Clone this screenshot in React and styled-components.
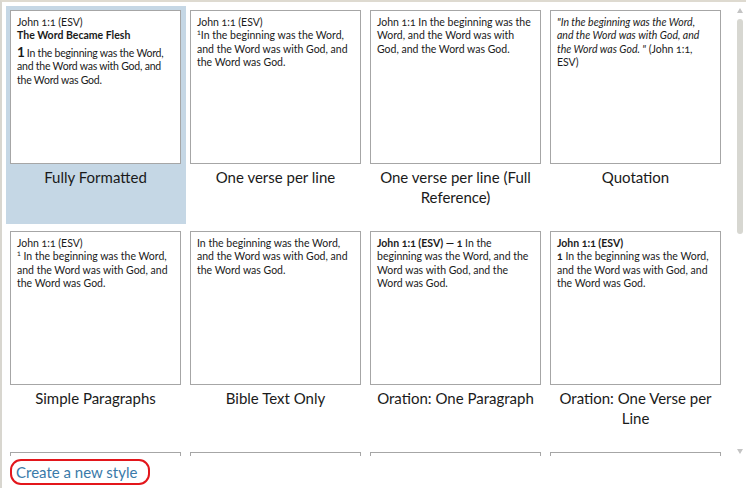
import React from "react";
import styled, { createGlobalStyle } from "styled-components";

const Global = createGlobalStyle`
  html, body { margin: 0; padding: 0; background: #fff; }
  body { font-family: Lato, "Noto Sans", sans-serif; color: #1e1e1e; }
`;

const Frame = styled.div`
  width: 746px;
  height: 488px;
  box-sizing: border-box;
  border-left: 2px solid #d8d6cf;
  border-top: 2px solid #dedad0;
  display: flex;
  flex-direction: column;
  overflow: hidden;
`;

const Body = styled.div`
  flex: 1;
  display: flex;
  min-height: 0;
`;

const Viewport = styled.div`
  flex: 1;
  overflow: hidden;
  padding: 4px 0 0 4px;
`;

const Grid = styled.div`
  display: grid;
  grid-template-columns: repeat(4, 180px);
  grid-auto-rows: 218px;
  row-gap: 3px;
`;

const Tile = styled.div`
  box-sizing: border-box;
  padding: 4px 5px 0 4px;
  background: ${(p) => (p.$selected ? "#c5d7e5" : "transparent")};
  display: flex;
  flex-direction: column;
`;

const Card = styled.div`
  box-sizing: border-box;
  height: 154px;
  border: 1px solid #a6a6a6;
  background: #fff;
  padding: 5px 9px 5px 6px;
  font-size: 10.5px;
  line-height: 13.4px;
  color: #1a1a1a;
  font-variant-numeric: oldstyle-nums;
  overflow: hidden;
`;

const Line = styled.div`
  font-weight: ${(p) => (p.$bold ? 700 : 400)};
  font-style: ${(p) => (p.$italic ? "italic" : "normal")};
  margin-top: ${(p) => p.$mt || 0}px;
  letter-spacing: ${(p) => (p.$tight ? "-0.22px" : "normal")};
`;

const BigNum = styled.span`
  font-size: 13.5px;
  font-weight: 700;
  font-variant-numeric: lining-nums;
  letter-spacing: 0;
  margin-right: 2px;
`;

const Sup = styled.sup`
  font-size: 7px;
  line-height: 0;
  vertical-align: 4px;
`;

const Label = styled.div`
  margin-top: 4px;
  padding: 0 3px;
  text-align: center;
  font-size: 15px;
  line-height: 19.5px;
  color: #1a1a1a;
`;

const Scrollbar = styled.div`
  width: 13px;
  display: flex;
  flex-direction: column;
  align-items: center;
  padding-top: 6px;
  box-sizing: border-box;
`;

const Arrow = styled.div`
  width: 0;
  height: 0;
  border-left: 3.5px solid transparent;
  border-right: 3.5px solid transparent;
  ${(p) =>
    p.$down
      ? "border-top: 5px solid #c4c4c4; margin-top: auto; margin-bottom: 2px;"
      : "border-bottom: 5px solid #c4c4c4;"}
`;

const Thumb = styled.div`
  width: 6px;
  height: 215px;
  margin-top: 6px;
  border-radius: 3px;
  background: #d7d7d1;
`;

const Footer = styled.div`
  height: 32px;
  display: flex;
  align-items: center;
  padding-left: 8px;
  flex-shrink: 0;
`;

const CreateLink = styled.a`
  display: inline-block;
  box-sizing: border-box;
  height: 26px;
  line-height: 22px;
  padding: 0 11px 0 4px;
  border: 2px solid #e3161b;
  border-radius: 11px;
  color: #3a7aa9;
  font-size: 15px;
  text-decoration: none;
  cursor: pointer;
`;

const verse = "In the beginning was the Word, and the Word was with God, and the Word was God.";

const tiles = [
  {
    label: "Fully Formatted",
    selected: true,
    body: (
      <>
        <Line>John 1:1 (ESV)</Line>
        <Line $bold>The Word Became Flesh</Line>
        <Line $mt={3} $tight>
          <BigNum>1</BigNum>
          {verse}
        </Line>
      </>
    ),
  },
  {
    label: "One verse per line",
    body: (
      <>
        <Line>John 1:1 (ESV)</Line>
        <Line>
          <Sup>1</Sup>
          {verse}
        </Line>
      </>
    ),
  },
  {
    label: "One verse per line (Full Reference)",
    body: <Line>John 1:1 {verse}</Line>,
  },
  {
    label: "Quotation",
    body: (
      <Line>
        <i>"{verse} "</i> (John 1:1, ESV)
      </Line>
    ),
  },
  {
    label: "Simple Paragraphs",
    body: (
      <>
        <Line>John 1:1 (ESV)</Line>
        <Line>
          <Sup>1</Sup> {verse}
        </Line>
      </>
    ),
  },
  {
    label: "Bible Text Only",
    body: <Line>{verse}</Line>,
  },
  {
    label: "Oration: One Paragraph",
    body: (
      <Line>
        <b>John 1:1 (ESV) — 1</b> {verse}
      </Line>
    ),
  },
  {
    label: "Oration: One Verse per Line",
    body: (
      <>
        <Line $bold>John 1:1 (ESV)</Line>
        <Line>
          <b>1</b> {verse}
        </Line>
      </>
    ),
  },
  { label: "", body: null },
  { label: "", body: null },
  { label: "", body: null },
  { label: "", body: null },
];

export default function App() {
  return (
    <>
      <Global />
      <Frame>
        <Body>
          <Viewport>
            <Grid>
              {tiles.map((t, i) => (
                <Tile key={i} $selected={t.selected}>
                  <Card>{t.body}</Card>
                  <Label>{t.label}</Label>
                </Tile>
              ))}
            </Grid>
          </Viewport>
          <Scrollbar>
            <Arrow />
            <Thumb />
            <Arrow $down />
          </Scrollbar>
        </Body>
        <Footer>
          <CreateLink>Create a new style</CreateLink>
        </Footer>
      </Frame>
    </>
  );
}
